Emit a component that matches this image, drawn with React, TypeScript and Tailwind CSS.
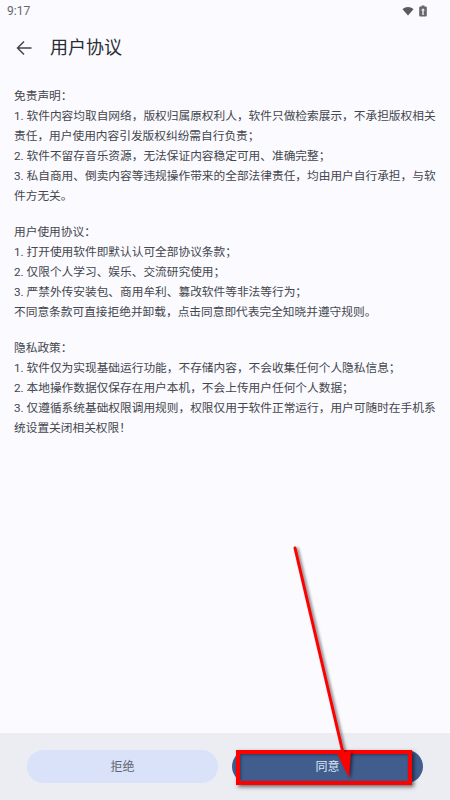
const font = "font-['Roboto','Noto_Sans_CJK_SC',sans-serif]";

const sections = [
  [
    "免责声明：",
    "1. 软件内容均取自网络，版权归属原权利人，软件只做检索展示，不承担版权相关责任，用户使用内容引发版权纠纷需自行负责；",
    "2. 软件不留存音乐资源，无法保证内容稳定可用、准确完整；",
    "3. 私自商用、倒卖内容等违规操作带来的全部法律责任，均由用户自行承担，与软件方无关。",
  ],
  [
    "用户使用协议：",
    "1. 打开使用软件即默认认可全部协议条款；",
    "2. 仅限个人学习、娱乐、交流研究使用；",
    "3. 严禁外传安装包、商用牟利、篡改软件等非法等行为；",
    "不同意条款可直接拒绝并卸载，点击同意即代表完全知晓并遵守规则。",
  ],
  [
    "隐私政策：",
    "1. 软件仅为实现基础运行功能，不存储内容，不会收集任何个人隐私信息；",
    "2. 本地操作数据仅保存在用户本机，不会上传用户任何个人数据；",
    "3. 仅遵循系统基础权限调用规则，权限仅用于软件正常运行，用户可随时在手机系统设置关闭相关权限！",
  ],
];

function StatusBar() {
  return (
    <div className="flex h-[20px] items-center justify-between pl-[7px] pr-[23px] pt-[1px]">
      <span className="text-[12px] text-[#66666d]">9:17</span>
      <div className="flex items-center gap-[5px]">
        <svg width="12" height="10" viewBox="0 0 12 10">
          <path d="M0.5 3.2 C3.5 0.4 8.5 0.4 11.5 3.2 L6 9.5 Z" fill="#5a5a60" />
        </svg>
        <svg width="8" height="12" viewBox="0 0 8 12">
          <path d="M2.6 0.5h2.8v1h1.4a1 1 0 0 1 1 1v8a1 1 0 0 1-1 1H1.2a1 1 0 0 1-1-1v-8a1 1 0 0 1 1-1h1.4z" fill="#66666c" />
          <path d="M4 3.2 6 5.6H4.7V10H3.3V5.6H2z" fill="#f0f0f5" />
        </svg>
      </div>
    </div>
  );
}

export default function App() {
  return (
    <div className={`relative flex h-[800px] w-[450px] flex-col overflow-hidden bg-[#fafaff] ${font}`}>
      <StatusBar />
      <header className="flex h-[55px] items-center pl-[16px]">
        <svg width="16" height="16" viewBox="0 0 16 16" fill="none" stroke="#44464c" strokeWidth="1.5">
          <path d="M15.5 8H1.5M8 1.5 1.5 8 8 14.5" />
        </svg>
        <h1 className="ml-[18px] text-[18px] leading-none text-[#2b2d33]">用户协议</h1>
      </header>
      <main className="flex flex-1 flex-col gap-[16px] px-[14px] pt-[11px] text-[11.7px] leading-[20px] text-[#44464c]">
        {sections.map((lines) => (
          <div key={lines[0]}>
            {lines.map((line) => (
              <p key={line}>{line}</p>
            ))}
          </div>
        ))}
      </main>
      <footer className="flex h-[67px] items-start gap-[14px] bg-[#ebedf3] px-[27px] pt-[17px]">
        <button type="button" className="h-[33px] w-[191px] rounded-full bg-[#d9e2f9] text-[12px] text-[#62656d]">
          拒绝
        </button>
        <button type="button" className="h-[33px] w-[191px] rounded-full bg-[#405d8e] text-[12px] text-[#dfe6f5]">
          同意
        </button>
      </footer>

      {/* red annotation over the screenshot */}
      <div className="pointer-events-none absolute left-[236px] top-[750px] h-[35px] w-[176px] border-[4px] border-[#ff0000] shadow-[2px_2px_4px_rgba(0,0,0,0.55),inset_1px_1px_3px_rgba(0,0,0,0.35)]" />
      <svg
        className="pointer-events-none absolute left-0 top-0 drop-shadow-[2px_1px_1.5px_rgba(0,0,0,0.5)]"
        width="450"
        height="800"
        viewBox="0 0 450 800"
      >
        <path d="M295 548 L344 757" stroke="#ff0000" strokeWidth="3" strokeLinecap="round" fill="none" />
        <path d="M337.5 754 L351 751 L349 778 Z" fill="#ff0000" />
      </svg>
    </div>
  );
}
